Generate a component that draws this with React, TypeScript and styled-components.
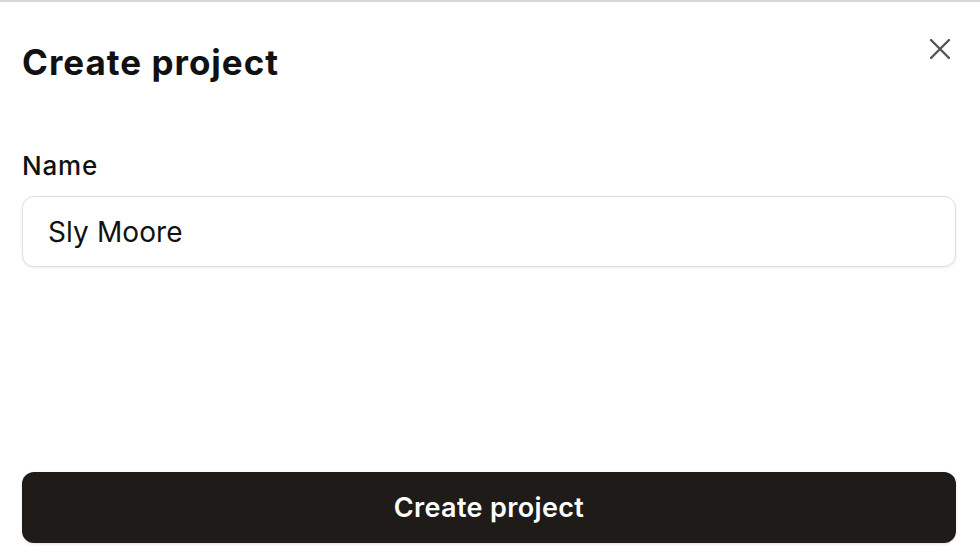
import React from "react";
import styled, { createGlobalStyle } from "styled-components";

const Global = createGlobalStyle`
  html, body { margin: 0; padding: 0; background: #ffffff; }
  body { font-family: Inter, "Noto Sans", sans-serif; -webkit-font-smoothing: antialiased; }
  * { box-sizing: border-box; }
`;

const Dialog = styled.div`
  width: 980px;
  height: 560px;
  border-top: 2px solid #d9d5d1;
  padding: 0 24px 0 22px;
  display: flex;
  flex-direction: column;
  background: #fff;
`;

const Header = styled.div`
  display: flex;
  align-items: flex-start;
  justify-content: space-between;
  padding-top: 38px;
`;

const Title = styled.h1`
  margin: 0;
  font-size: 35px;
  line-height: 44px;
  font-weight: 700;
  letter-spacing: 1px;
  color: #111;
`;

const CloseButton = styled.button`
  border: 0;
  background: transparent;
  padding: 0;
  margin: -1px 6px 0 0;
  width: 20px;
  height: 20px;
  display: flex;
  align-items: center;
  justify-content: center;
  cursor: pointer;
  color: #555;
`;

const Field = styled.div`
  display: flex;
  flex-direction: column;
  gap: 14px;
  margin-top: 66px;
`;

const Label = styled.label`
  font-size: 26px;
  line-height: 32px;
  font-weight: 500;
  letter-spacing: 0.8px;
  color: #111;
`;

const Input = styled.input`
  height: 71px;
  width: 100%;
  border: 1.5px solid #dfdfdf;
  border-radius: 12px;
  padding: 0 25px;
  font-family: Inter, "Noto Sans", sans-serif;
  font-size: 28px;
  letter-spacing: 0.1px;
  color: #111;
  box-shadow: 0 1px 3px rgba(0, 0, 0, 0.08);
  outline: none;
  background: #fff;
`;

const Spacer = styled.div`
  flex: 1;
`;

const PrimaryButton = styled.button`
  height: 71px;
  width: 100%;
  border: 0;
  border-radius: 12px;
  background: #1e1b19;
  color: #fff;
  font-family: Inter, "Noto Sans", sans-serif;
  font-size: 27px;
  font-weight: 600;
  letter-spacing: 0.35px;
  box-shadow: 0 1px 3px rgba(0, 0, 0, 0.12);
  margin-bottom: 17px;
  cursor: pointer;
`;

export default function App() {
  return (
    <>
      <Global />
      <Dialog>
        <Header>
          <Title>Create project</Title>
          <CloseButton aria-label="Close">
            <svg width="20" height="20" viewBox="0 0 20 20" fill="none">
              <path d="M1 1L19 19M19 1L1 19" stroke="currentColor" strokeWidth="2.4" strokeLinecap="round" />
            </svg>
          </CloseButton>
        </Header>
        <Field>
          <Label>Name</Label>
          <Input defaultValue="Sly Moore" />
        </Field>
        <Spacer />
        <PrimaryButton>Create project</PrimaryButton>
      </Dialog>
    </>
  );
}
